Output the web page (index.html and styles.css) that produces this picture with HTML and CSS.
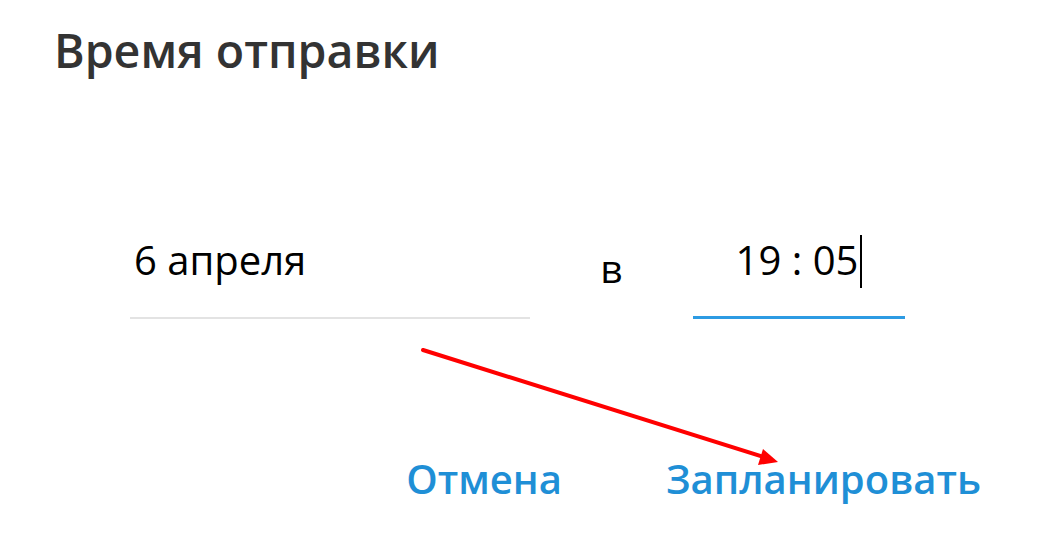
FILE: index.html
```html
<!DOCTYPE html>
<html lang="ru">
<head>
<meta charset="utf-8">
<title>Время отправки</title>
<link rel="stylesheet" href="styles.css">
</head>
<body>
<div class="box">
  <h1 class="title">Время отправки</h1>
  <div class="fields">
    <div class="field date">6 апреля</div>
    <div class="sep">в</div>
    <div class="field time"><span class="value">19 : 05</span><span class="cursor"></span></div>
  </div>
  <div class="buttons">
    <button class="btn">Отмена</button>
    <button class="btn">Запланировать</button>
  </div>
  <svg class="arrow" width="1046" height="545" viewBox="0 0 1046 545">
    <line x1="423" y1="350" x2="764" y2="457" stroke="#ff0000" stroke-width="4" stroke-linecap="round"/>
    <polygon points="778,462 758,465 763,449" fill="#ff0000"/>
  </svg>
</div>
</body>
</html>
```
FILE: styles.css
```css
html, body {
  margin: 0;
  padding: 0;
  background: #ffffff;
}
.box {
  position: relative;
  width: 1046px;
  height: 545px;
  font-family: "Open Sans", "Noto Sans", sans-serif;
}
.title {
  margin: 0;
  padding: 18px 0 0 54px;
  font-size: 46.5px;
  line-height: 64px;
  font-weight: 600;
  color: #333333;
}
.fields {
  display: flex;
  align-items: flex-start;
  margin-top: 154px;
  padding-left: 130px;
}
.field {
  font-size: 40px;
  line-height: 48px;
  color: #000000;
  height: 48px;
  padding-bottom: 33px;
}
.date {
  width: 396px;
  padding-left: 4px;
  border-bottom: 2px solid #e3e3e3;
}
.sep {
  width: 163px;
  text-align: center;
  font-size: 39px;
  line-height: 48px;
  padding-top: 8px;
  color: #000000;
}
.time {
  width: 212px;
  display: flex;
  justify-content: center;
  align-items: center;
  border-bottom: 3px solid #2d9be3;
  padding-bottom: 32px;
}
.cursor {
  width: 2px;
  height: 53px;
  background: #000000;
  margin-left: 2px;
  margin-top: 2px;
}
.buttons {
  display: flex;
  justify-content: flex-end;
  gap: 104px;
  padding-right: 65px;
  margin-top: 136px;
}
.btn {
  border: 0;
  background: none;
  padding: 0;
  font-family: "Open Sans", "Noto Sans", sans-serif;
  font-size: 40px;
  line-height: 48px;
  font-weight: 600;
  color: #1f8fd6;
}
.arrow {
  position: absolute;
  left: 0;
  top: 0;
  pointer-events: none;
}
```
